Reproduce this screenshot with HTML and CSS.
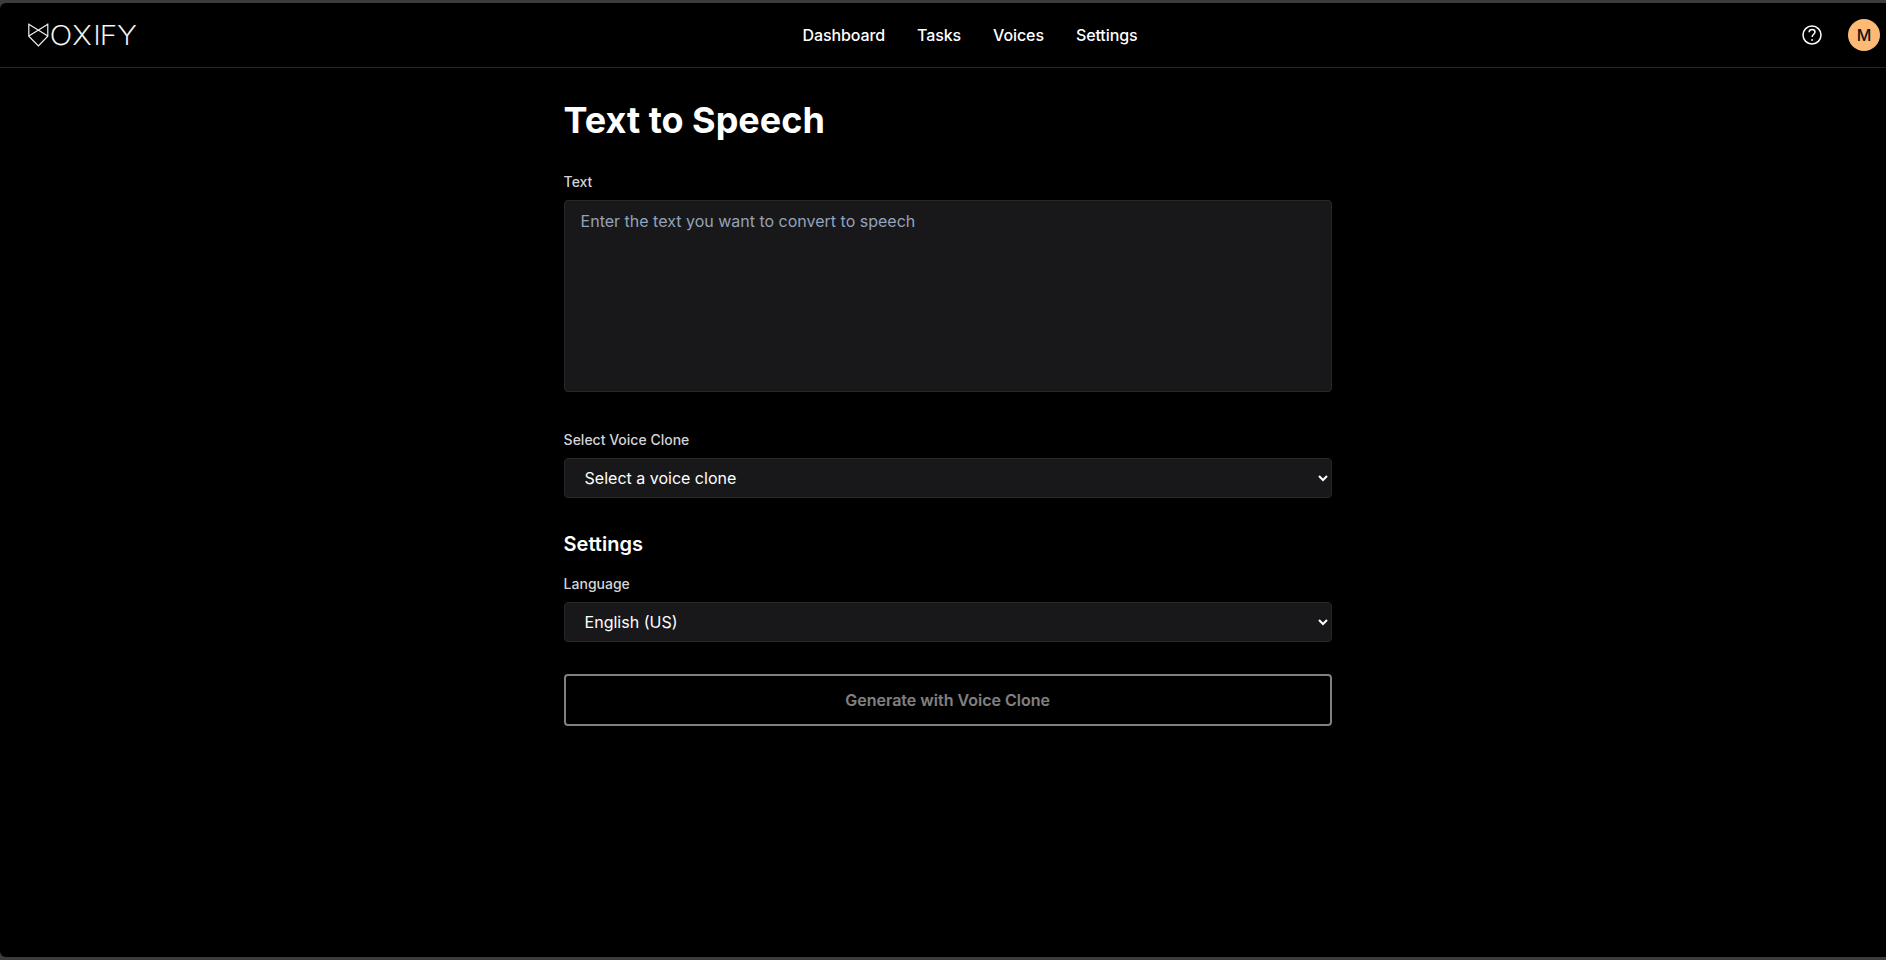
FILE: index.html
```html
<!DOCTYPE html>
<html lang="en">
<head>
<meta charset="utf-8">
<title>Voxify</title>
<link rel="stylesheet" href="styles.css">
</head>
<body>
<div class="app">
  <header class="header">
    <a class="logo" aria-label="Voxify">
      <svg width="120" height="44" viewBox="0 -8 120 44">
        <path class="logo-mark" d="M1.8 3.2 20.8 15M20.8 3.2 1.8 15M1.8 2.5V15.2L11.4 25 20.8 15.2V2.5"/>
        <text class="logo-text" transform="scale(1.1 1)" x="20.6 41.3 60.2 66.2 82.1" y="24.3">OXIFY</text>
      </svg>
    </a>
    <nav class="nav">
      <a>Dashboard</a>
      <a>Tasks</a>
      <a>Voices</a>
      <a>Settings</a>
    </nav>
    <div class="actions">
      <svg class="help" width="24" height="24" viewBox="0 0 24 24">
        <circle cx="12" cy="12" r="9"/>
        <path d="M9.1 9.2C9.2 7.5 10.4 6.6 12.1 6.6C13.9 6.6 15 7.7 15 9.1C15 11.2 12.2 11.5 12.2 14"/>
        <circle class="dot" cx="12.1" cy="17" r="0.9"/>
      </svg>
      <span class="avatar">M</span>
    </div>
  </header>
  <main class="main">
    <h1 class="title">Text to Speech</h1>
    <label class="label" for="text">Text</label>
    <textarea class="field textarea" id="text" placeholder="Enter the text you want to convert to speech"></textarea>
    <label class="label" for="voice">Select Voice Clone</label>
    <select class="field select" id="voice"><option>Select a voice clone</option></select>
    <h2 class="subtitle">Settings</h2>
    <label class="label" for="language">Language</label>
    <select class="field select" id="language"><option>English (US)</option></select>
    <button class="generate" disabled>Generate with Voice Clone</button>
  </main>
</div>
</body>
</html>
```
FILE: styles.css
```css
* {
  box-sizing: border-box;
}

body {
  margin: 0;
  height: 960px;
  padding: 3px 0;
  background: #3c3c3c;
  color: #fff;
  font-family: Inter, sans-serif;
  font-size: 16px;
  line-height: 24px;
  overflow: hidden;
}

.app {
  height: 954px;
  background: #000;
  border-radius: 6px 0 0 6px;
}

.header {
  display: grid;
  grid-template-columns: 1fr auto 1fr;
  align-items: center;
  height: 65px;
  padding: 0 6px 0 27px;
  border-bottom: 1px solid #27272a;
}

.logo {
  display: flex;
}

.logo-mark {
  fill: none;
  stroke: #f0f0f0;
  stroke-width: 1.2;
}

.logo-text {
  fill: #fff;
  stroke: #fff;
  stroke-width: 0.25;
  font-size: 27px;
  font-weight: 200;
}

.nav {
  display: flex;
  gap: 32px;
  margin-left: 33px;
  font-weight: 500;
  letter-spacing: -0.1px;
}

.actions {
  display: flex;
  justify-content: flex-end;
  align-items: center;
  gap: 24px;
}

.help {
  fill: none;
  stroke: #fff;
  stroke-width: 1.5;
}

.help .dot {
  fill: #fff;
  stroke: none;
}

.avatar {
  width: 32px;
  height: 32px;
  border-radius: 50%;
  background: #fdba74;
  color: #111;
  font-weight: 500;
  line-height: 32px;
  text-align: center;
}

.main {
  display: flex;
  flex-direction: column;
  width: 768px;
  margin-left: 563.6px;
  padding-top: 32px;
}

.title {
  margin: 0 0 32px;
  font-size: 36px;
  font-weight: 700;
  line-height: 40px;
}

.label {
  margin-bottom: 8px;
  color: #d4d4d8;
  font-size: 14px;
  font-weight: 500;
  line-height: 20px;
}

.field {
  width: 100%;
  border: 1px solid #27272a;
  border-radius: 4px;
  background-color: #18181b;
  color: #fff;
  font: inherit;
}

.textarea {
  height: 192px;
  margin: 0 0 38px;
  padding: 8px 16px;
  resize: none;
}

.textarea::placeholder {
  color: #94a3b8;
}

.select {
  height: 40px;
  padding: 0 16px;
}

.subtitle {
  margin: 32px 0 16px;
  font-size: 20px;
  font-weight: 600;
  line-height: 28px;
}

.generate {
  height: 52px;
  margin-top: 32px;
  border: 2px solid #fff;
  border-radius: 4px;
  background: #000;
  color: #fff;
  font: 600 16px/24px Inter, sans-serif;
  opacity: 0.5;
}
```
